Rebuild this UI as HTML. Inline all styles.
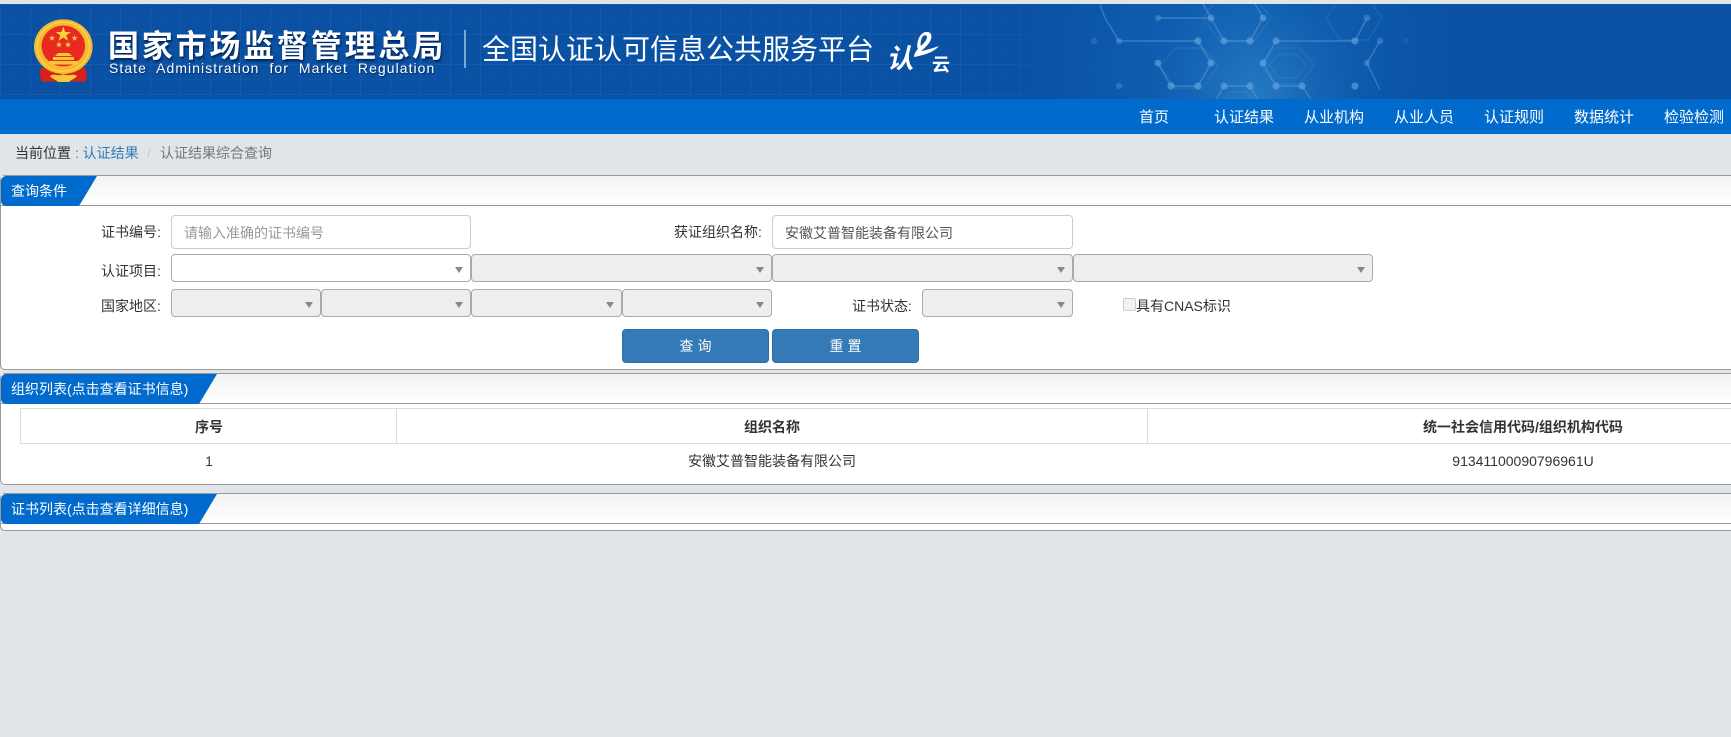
<!DOCTYPE html>
<html lang="zh-CN">
<head>
<meta charset="utf-8">
<title>全国认证认可信息公共服务平台</title>
<style>
*{box-sizing:border-box}
html,body{margin:0;padding:0;width:1731px;height:737px;overflow:hidden;background:#e0e5e9}
body{font-family:"Liberation Sans","Noto Sans CJK SC",sans-serif;font-size:14px;color:#333;position:relative}
.a{position:absolute;white-space:nowrap}
.hdr{left:0;top:4px;width:1731px;height:95px;background:#0a51a3;overflow:hidden}
.nav{left:0;top:99px;width:1731px;height:35px;background:#006bcc}
.nav span{position:absolute;top:0;line-height:37px;font-size:15px;color:#fff;white-space:nowrap}
.panel{position:absolute;left:0;width:1760px;background:#fff;border:1px solid #999;border-radius:5px}
.phead{position:absolute;left:0;top:0;right:0;height:30px;border-bottom:1px solid #999;background:linear-gradient(#f3f3f3,#fff)}
.tab{position:absolute;left:0;top:0;height:30px}
.tabt{position:absolute;left:10px;top:1px;line-height:29px;color:#fff;font-size:14px;white-space:nowrap}
.lab{position:absolute;line-height:20px;text-align:right;white-space:nowrap;color:#333}
.inp{position:absolute;height:34px;border:1px solid #ccc;border-radius:4px;background:#fff;line-height:34px;padding-left:12px;white-space:nowrap}
.sel{position:absolute;height:28px;border:1px solid #aaa;border-radius:4px;background:#eee}
.sel.w{background:#fff}
.sel:after{content:"";position:absolute;right:7px;top:12px;border-left:4px solid transparent;border-right:4px solid transparent;border-top:6px solid #888}
.btn{position:absolute;top:329px;height:34px;background:#337ab7;border:1px solid #2e6da4;border-radius:4px;color:#fff;text-align:center;line-height:33px;letter-spacing:4px;padding-left:4px}
.cell{position:absolute;text-align:center;white-space:nowrap}
</style>
</head>
<body>
<div class="a hdr">
<svg width="1731" height="95" style="position:absolute;left:0;top:0">
<defs>
<pattern id="g" width="30" height="30" patternUnits="userSpaceOnUse"><path d="M0 .5H30M.5 0V30" stroke="#2a70bd" stroke-opacity=".35" fill="none"/><path d="M0 15.5H30M15.5 0V30" stroke="#2a70bd" stroke-opacity=".13" fill="none"/></pattern>
<linearGradient id="gf" x1="0" x2="1" y1="0" y2="0"><stop offset="0" stop-color="#fff"/><stop offset=".55" stop-color="#fff"/><stop offset=".66" stop-color="#fff" stop-opacity="0"/></linearGradient>
<mask id="gm"><rect width="1731" height="95" fill="url(#gf)"/></mask>
<radialGradient id="glow" gradientUnits="userSpaceOnUse" cx="1257" cy="92" r="110"><stop offset="0" stop-color="#2f86c6" stop-opacity=".7"/><stop offset="1" stop-color="#1a6cba" stop-opacity="0"/></radialGradient>
<radialGradient id="glow2" gradientUnits="userSpaceOnUse" cx="1240" cy="50" r="230"><stop offset="0" stop-color="#1668ba" stop-opacity=".85"/><stop offset=".6" stop-color="#0f5db0" stop-opacity=".6"/><stop offset="1" stop-color="#0a51a3" stop-opacity="0"/></radialGradient>
</defs>
<rect width="1731" height="95" fill="url(#g)" mask="url(#gm)"/>
<rect x="1000" y="0" width="490" height="95" fill="url(#glow2)"/>
<rect x="1140" y="0" width="240" height="95" fill="url(#glow)"/>
<g transform="translate(0,-4)">
<g fill="none" stroke="#5f9fd8" stroke-opacity=".5" stroke-width="1.4">
<path d="M1158 18H1211L1224 41H1250L1263 18L1250 -5M1211 18L1198 -5M1119 41H1198L1211 63L1198 86H1171L1158 63"/>
<path d="M1276 41H1355M1276 41L1263 63L1276 86H1302L1315 105M1224 86H1250L1258 100M1224 86L1216 100M1119 41L1105 18L1100 5"/>
<path d="M1380 41L1367 63L1380 90M1355 41L1367 18"/>
</g>
<g fill="none" stroke="#5f9fd8" stroke-opacity=".25">
<path d="M1220 -4L1254 -4L1271 18L1254 41H1220L1203 18Z"/>
<path d="M1175 48H1203L1218 66L1203 88H1175L1160 66Z"/>
<path d="M1275 48H1300L1314 65L1300 84H1275L1261 65Z"/>
<path d="M1279 54H1296L1306 65L1296 78H1279L1269 65Z"/>
<path d="M1340 -2H1368L1382 18L1368 40H1340L1326 18Z"/>
<path d="M1230 92H1246L1252 99H1224Z"/>
</g>
<g fill="#6aa6dc" fill-opacity=".6">
<circle cx="1158" cy="18" r="3.2" fill-opacity=".35"/><circle cx="1158" cy="63" r="3.4"/><circle cx="1211" cy="18" r="3.4"/><circle cx="1263" cy="18" r="3.4"/>
<circle cx="1119" cy="41" r="3.2" fill-opacity=".4"/><circle cx="1094" cy="41" r="3" fill-opacity=".25"/>
<circle cx="1198" cy="41" r="3.6"/><circle cx="1224" cy="41" r="3.6"/><circle cx="1250" cy="41" r="3.6"/><circle cx="1276" cy="41" r="3.6"/><circle cx="1355" cy="41" r="3.6"/>
<circle cx="1211" cy="63" r="3.6"/><circle cx="1263" cy="63" r="3.6"/><circle cx="1119" cy="86" r="3.2" fill-opacity=".35"/>
<circle cx="1171" cy="86" r="3.6"/><circle cx="1198" cy="86" r="3.6"/><circle cx="1224" cy="86" r="3.6"/><circle cx="1250" cy="86" r="3.6"/><circle cx="1276" cy="86" r="3.6"/><circle cx="1302" cy="86" r="3.6"/><circle cx="1355" cy="86" r="3.6"/>
<circle cx="1367" cy="63" r="3.4" fill-opacity=".4"/><circle cx="1367" cy="18" r="3.4" fill-opacity=".4"/><circle cx="1380" cy="41" r="3.4" fill-opacity=".35"/><circle cx="1406" cy="41" r="3" fill-opacity=".15"/>
</g>
</g>
</svg>
</div>

<svg class="a" style="left:32px;top:18px" width="64" height="66" viewBox="0 0 64 66">
<path d="M9 50C7 55 8 60 10 64C16 63 21 64 26 63L31 60L36 63C41 64 47 63 53 64C55 60 56 55 53 50Z" fill="#d6211c"/>
<ellipse cx="31.300" cy="28.700" rx="29.300" ry="27.300" fill="#f5bb2e"/>
<ellipse cx="31.300" cy="28.700" rx="26" ry="24.500" fill="none" stroke="#fbd55a" stroke-width="1.200"/>
<ellipse cx="31.300" cy="28" rx="21.800" ry="20.500" fill="#ea2a20"/>
<path d="M18 58C22 55 27 59 31.300 56C36 59 41 55 45 58C43 61 40 61 37 64H26C23 61 20 61 18 58Z" fill="#f6c53a"/>
<path d="M17 43H46V46.500H17ZM21 39H42V42H21ZM26 35H37L40 38H23Z" fill="#f6c53a"/>
<path d="M31.300 8.500L33.200 14H39L34.300 17.400L36.100 22.900L31.300 19.500L26.500 22.900L28.300 17.400L23.600 14H29.400Z" fill="#f9d23d"/>
<path d="M20 17l.8 2.200h2.300l-1.900 1.400.7 2.200-1.900-1.300-1.900 1.300.7-2.200-1.900-1.400h2.300zM42.600 17l.8 2.200h2.300l-1.900 1.400.7 2.200-1.900-1.300-1.900 1.300.7-2.200-1.900-1.400h2.300zM27 23.500l.8 2.200h2.300l-1.900 1.400.7 2.200-1.900-1.300-1.900 1.300.7-2.200-1.900-1.400h2.300zM36 23.500l.8 2.200h2.300l-1.900 1.400.7 2.200-1.900-1.300-1.900 1.300.7-2.200-1.900-1.400h2.300z" fill="#f9d23d"/>
</svg>

<div class="a" style="left:108px;top:22px;font-size:31px;line-height:44px;font-weight:700;color:#fff;letter-spacing:2.8px;text-shadow:1px 2px 2px rgba(0,20,60,.75);font-family:'Noto Sans CJK SC',sans-serif">国家市场监督管理总局</div>
<div class="a" style="left:109px;top:59px;font-size:14px;line-height:18px;color:#fff;letter-spacing:1.05px;word-spacing:5px;text-shadow:1px 1px 1px rgba(0,20,60,.6)">State Administration for Market Regulation</div>
<div class="a" style="left:464px;top:30px;width:2px;height:38px;background:#7fa6d3"></div>
<div class="a" style="left:482px;top:27px;font-size:28px;line-height:42px;color:#fff;font-family:'Noto Sans CJK SC',sans-serif">全国认证认可信息公共服务平台</div>

<div class="a" style="left:889px;top:42px;font-size:27px;line-height:30px;color:#fff;font-weight:700;transform:skewX(-12deg);font-family:'Noto Sans CJK SC',sans-serif">认</div>
<svg class="a" style="left:908px;top:30px" width="32" height="32" viewBox="0 0 32 32"><path d="M15 3C20 0 25 3 23 9C22 13 18 17 13 21C19 20 25 18 31 16C26 22 17 25 6 27C6 24 8 21 10 19C8 16 10 6 15 3ZM15 6C13 9 12 13 13 16C16 13 19 10 19 7C19 5 17 5 15 6Z" fill="#fff" fill-rule="evenodd"/></svg>
<div class="a" style="left:932px;top:53px;font-size:18px;line-height:22px;color:#fff;font-weight:700;font-family:'Noto Sans CJK SC',sans-serif">云</div>

<div class="a nav">
<span style="left:1139px">首页</span>
<span style="left:1214px">认证结果</span>
<span style="left:1304px">从业机构</span>
<span style="left:1394px">从业人员</span>
<span style="left:1484px">认证规则</span>
<span style="left:1574px">数据统计</span>
<span style="left:1664px">检验检测</span>
</div>

<div class="a" style="left:15px;top:142.500px;line-height:20px;color:#333">当前位置<span style="color:#777"> : </span><span style="color:#337ab7">认证结果</span></div>
<div class="a" style="left:147px;top:142.500px;line-height:20px;color:#ccc">/</div>
<div class="a" style="left:160px;top:142.500px;line-height:20px;color:#777">认证结果综合查询</div>

<!-- panel 1 -->
<div class="panel" style="top:175px;height:195px">
<div class="phead"></div>
<svg class="tab" width="96" height="30"><path d="M0 5A5 5 0 0 1 5 0H96L78 30H5A5 5 0 0 1 0 25Z" fill="#006bcc"/></svg>
<div class="tabt">查询条件</div>
</div>
<div class="lab" style="left:101px;top:222px">证书编号:</div>
<div class="inp" style="left:171px;top:215px;width:300px;color:#999">请输入准确的证书编号</div>
<div class="lab" style="left:674px;top:222px">获证组织名称:</div>
<div class="inp" style="left:772px;top:215px;width:301px;color:#555">安徽艾普智能装备有限公司</div>

<div class="lab" style="left:101px;top:261px">认证项目:</div>
<div class="sel w" style="left:171px;top:254px;width:300px"></div>
<div class="sel" style="left:471px;top:254px;width:301px"></div>
<div class="sel" style="left:772px;top:254px;width:301px"></div>
<div class="sel" style="left:1073px;top:254px;width:300px"></div>

<div class="lab" style="left:101px;top:296px">国家地区:</div>
<div class="sel" style="left:171px;top:289px;width:150px"></div>
<div class="sel" style="left:321px;top:289px;width:150px"></div>
<div class="sel" style="left:471px;top:289px;width:151px"></div>
<div class="sel" style="left:622px;top:289px;width:150px"></div>
<div class="lab" style="left:852px;top:296px">证书状态:</div>
<div class="sel" style="left:922px;top:289px;width:151px"></div>
<div class="a" style="left:1123px;top:298px;width:13px;height:13px;border:1px solid #ccc;border-radius:2px;background:#f2f2f2"></div>
<div class="lab" style="left:1136px;top:296px">具有CNAS标识</div>
<div class="btn" style="left:622px;width:147px">查询</div>
<div class="btn" style="left:772px;width:147px">重置</div>

<!-- panel 2 -->
<div class="panel" style="top:373px;height:112px">
<div class="phead"></div>
<svg class="tab" width="217" height="30"><path d="M0 5A5 5 0 0 1 5 0H216L198 30H5A5 5 0 0 1 0 25Z" fill="#006bcc"/></svg>
<div class="tabt">组织列表(点击查看证书信息)</div>
</div>
<div class="a" style="left:20px;top:408px;width:1880px;height:36px;border:1px solid #ddd;border-right:0"></div>
<div class="a" style="left:396px;top:408px;width:1px;height:36px;background:#ddd"></div>
<div class="a" style="left:1147px;top:408px;width:1px;height:36px;background:#ddd"></div>
<div class="cell" style="left:21px;width:376px;top:417px;line-height:20px;font-weight:700">序号</div>
<div class="cell" style="left:397px;width:750px;top:417px;line-height:20px;font-weight:700">组织名称</div>
<div class="cell" style="left:1148px;width:750px;top:417px;line-height:20px;font-weight:700">统一社会信用代码/组织机构代码</div>
<div class="cell" style="left:21px;width:376px;top:451px;line-height:20px">1</div>
<div class="cell" style="left:397px;width:750px;top:451px;line-height:20px">安徽艾普智能装备有限公司</div>
<div class="cell" style="left:1148px;width:750px;top:451px;line-height:20px">91341100090796961U</div>

<!-- panel 3 -->
<div class="panel" style="top:493px;height:38px">
<div class="phead"></div>
<svg class="tab" width="217" height="30"><path d="M0 5A5 5 0 0 1 5 0H216L198 30H5A5 5 0 0 1 0 25Z" fill="#006bcc"/></svg>
<div class="tabt">证书列表(点击查看详细信息)</div>
</div>
</body>
</html>
